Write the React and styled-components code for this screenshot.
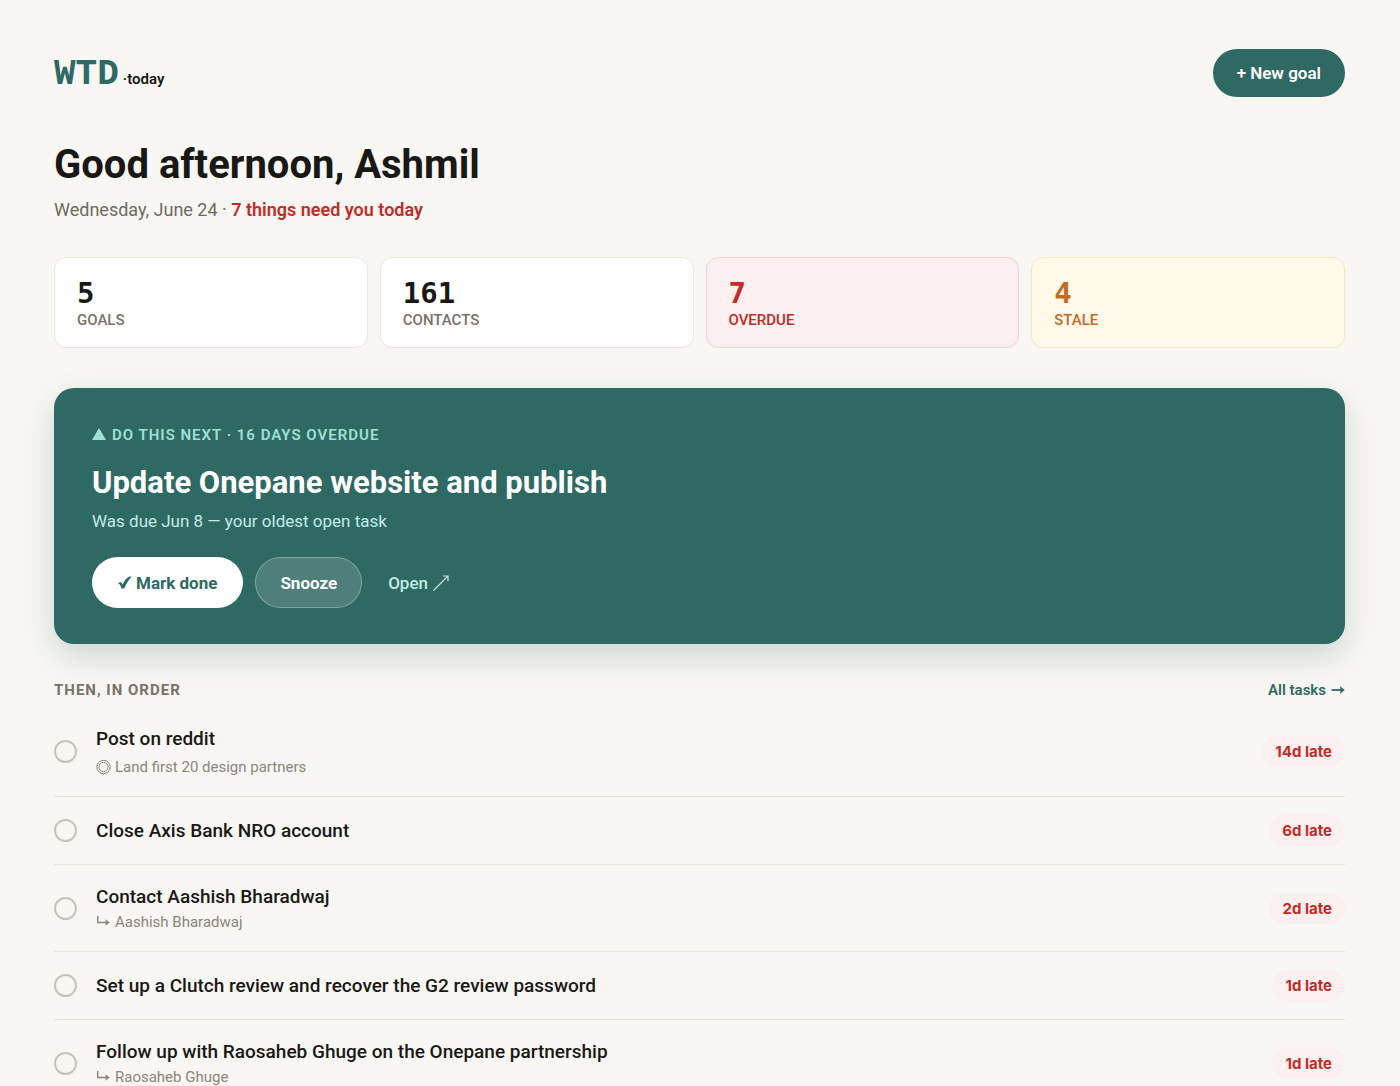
import React from "react";
import styled, { createGlobalStyle } from "styled-components";

const teal = "#2f6963";
const sans = `Roboto, "Liberation Sans", sans-serif`;
const grotesk = `Inter, "Liberation Sans", sans-serif`;

const GlobalStyle = createGlobalStyle`
  *, *::before, *::after { box-sizing: border-box; }
  body {
    margin: 0;
    background: #f9f7f3;
    color: #191815;
    font-family: ${sans};
    -webkit-font-smoothing: antialiased;
  }
  h1, h2, h3, p, ul, dl, dd { margin: 0; padding: 0; }
  button { font-family: inherit; cursor: pointer; }
  a { text-decoration: none; }
`;

const Page = styled.main`
  padding: 49px 55px 0 54px;
`;

const TopBar = styled.header`
  display: flex;
  align-items: center;
  justify-content: space-between;
`;

const Logo = styled.a`
  display: flex;
  align-items: baseline;
  gap: 4px;
  padding-top: 4px;
  color: #191815;
`;

const LogoMark = styled.span`
  font-family: "Liberation Mono", monospace;
  font-size: 36px;
  line-height: 44px;
  font-weight: 700;
  color: ${teal};
`;

const LogoSuffix = styled.span`
  font-size: 15px;
  font-weight: 600;
`;

const NewGoal = styled.button`
  height: 48px;
  padding: 0 24px;
  border: 0;
  border-radius: 24px;
  background: ${teal};
  color: #fff;
  font-size: 17px;
  font-weight: 600;
`;

const Greeting = styled.section`
  padding: 42px 0 35px;
`;

const Title = styled.h1`
  font-size: 40px;
  line-height: 52px;
  font-weight: 700;
`;

const Today = styled.p`
  padding-top: 7px;
  font-size: 18px;
  line-height: 24px;
  color: #6f6a62;
  strong { color: #c22c26; font-weight: 600; }
`;

const Stats = styled.dl`
  display: grid;
  grid-template-columns: repeat(4, 1fr);
  gap: 12px;
`;

const tones = {
  plain: { bg: "#ffffff", line: "#ebe7df", number: "#191815", label: "#7a7268" },
  danger: { bg: "#fbefef", line: "#f5cfd1", number: "#c22c26", label: "#c22c26" },
  warn: { bg: "#fef9e9", line: "#f9e6bf", number: "#c56c24", label: "#c56c24" },
};

const Stat = styled.div`
  display: flex;
  flex-direction: column-reverse;
  padding: 18px 22px 16px;
  border: 1px solid ${(p) => tones[p.$tone].line};
  border-radius: 12px;
  background: ${(p) => tones[p.$tone].bg};
  dt {
    font-size: 15px;
    line-height: 21px;
    font-weight: 500;
    color: ${(p) => tones[p.$tone].label};
  }
  dd {
    font-family: "DejaVu Sans Mono", monospace;
    font-size: 29px;
    line-height: 34px;
    font-weight: 700;
    color: ${(p) => tones[p.$tone].number};
  }
`;

const Hero = styled.section`
  margin-top: 40px;
  padding: 36px 38px;
  border-radius: 20px;
  background: ${teal};
  box-shadow: 0 12px 32px rgba(47, 105, 99, 0.22);
`;

const Eyebrow = styled.p`
  display: flex;
  align-items: center;
  gap: 6px;
  font-size: 15px;
  line-height: 22px;
  font-weight: 600;
  letter-spacing: 1px;
  color: #9fe0d6;
`;

const HeroTitle = styled.h2`
  padding-top: 17px;
  font-size: 31px;
  line-height: 40px;
  font-weight: 700;
  color: #fff;
`;

const HeroNote = styled.p`
  padding-top: 6px;
  font-size: 17px;
  line-height: 24px;
  color: #c2ebe3;
`;

const Actions = styled.div`
  display: flex;
  align-items: center;
  gap: 12px;
  padding-top: 24px;
`;

const Action = styled.button`
  display: flex;
  align-items: center;
  gap: 4px;
  height: 51px;
  padding: 0 ${(p) => (p.$ghost ? 24 : 26)}px;
  border: ${(p) => (p.$ghost ? "1px solid rgba(255, 255, 255, 0.3)" : "0")};
  border-radius: 26px;
  background: ${(p) => (p.$ghost ? "rgba(255, 255, 255, 0.15)" : "#fff")};
  color: ${(p) => (p.$ghost ? "#fff" : teal)};
  font-size: 17px;
  font-weight: 700;
`;

const OpenLink = styled.a`
  display: flex;
  align-items: center;
  gap: 5px;
  padding: 0 14px;
  font-size: 17px;
  font-weight: 500;
  color: #c2ebe3;
`;

const ListHeader = styled.div`
  display: flex;
  align-items: center;
  justify-content: space-between;
  padding: 34px 0 5px;
  line-height: 24px;
`;

const ListTitle = styled.h3`
  font-size: 15px;
  font-weight: 700;
  letter-spacing: 1px;
  color: #7a7268;
`;

const AllTasks = styled.a`
  display: flex;
  align-items: center;
  gap: 5px;
  font-size: 15px;
  font-weight: 600;
  color: ${teal};
`;

const List = styled.ul`
  list-style: none;
`;

const Row = styled.li`
  display: flex;
  align-items: center;
  padding: 18px 0;
  border-bottom: 1px solid #e6e3dd;
`;

const Check = styled.input`
  appearance: none;
  flex: none;
  width: 23px;
  height: 23px;
  margin: 0 19px 0 0;
  border: 2px solid #c9c2b7;
  border-radius: 50%;
  cursor: pointer;
`;

const Body = styled.div`
  flex: 1;
  min-width: 0;
`;

const TaskName = styled.label`
  display: block;
  font-size: 19px;
  line-height: 27px;
  font-weight: 500;
`;

const Context = styled.p`
  display: flex;
  align-items: center;
  gap: 4px;
  font-size: 15px;
  line-height: 21px;
  padding-top: ${(p) => (p.$goal ? 5 : 2)}px;
  color: #8c857b;
`;

const Late = styled.span`
  padding: 0 13px;
  border-radius: 16px;
  background: #fbefef;
  color: #c22c26;
  font-family: ${grotesk};
  font-size: 15px;
  line-height: 31px;
  font-weight: 700;
`;

const TriangleIcon = () => (
  <svg width="14" height="14" viewBox="0 0 14 14" aria-hidden="true">
    <path d="M7 0 L14 12 H0 Z" fill="currentColor" />
  </svg>
);

const TickIcon = () => (
  <svg width="14" height="14" viewBox="0 0 14 14" aria-hidden="true">
    <path d="M0.2 7.400 C1.600 5.800 3.400 5.800 4 7.600 L4.500 8.800 C6 5.200 8.400 1.800 11.400 0.400 L13.800 0.400 C10.400 3.800 8.200 7.600 6.400 12.200 L3.600 12.800 C2.900 10.400 2.200 8.200 0.200 7.400 Z" fill="currentColor" />
  </svg>
);

const OpenIcon = () => (
  <svg width="16" height="16" viewBox="0 0 16 16" fill="none" stroke="currentColor" aria-hidden="true">
    <path d="M0.500 15.500 L15 1 M10 1 H15 V6" strokeWidth="1.200" />
  </svg>
);

const ArrowIcon = () => (
  <svg width="14" height="10" viewBox="0 0 14 10" aria-hidden="true">
    <path d="M0.500 5 H11" stroke="currentColor" strokeWidth="1.800" />
    <path d="M8.800 1 L13.800 5 L8.800 9 L9.800 5 Z" fill="currentColor" />
  </svg>
);

const GoalIcon = () => (
  <svg width="15" height="15" viewBox="0 0 15 15" fill="none" stroke="currentColor" aria-hidden="true">
    <circle cx="7.500" cy="7" r="6.700" />
    <circle cx="7.500" cy="7" r="4.600" />
  </svg>
);

const ContactIcon = () => (
  <svg width="15" height="14" viewBox="0 0 15 14" aria-hidden="true">
    <path d="M1.700 0 V6.500 H11" fill="none" stroke="currentColor" strokeWidth="1.400" />
    <path d="M9.200 3.200 L13.800 6.500 L9.200 9.800 L10 6.500 Z" fill="currentColor" />
  </svg>
);

const stats = [
  { label: "GOALS", value: "5", tone: "plain" },
  { label: "CONTACTS", value: "161", tone: "plain" },
  { label: "OVERDUE", value: "7", tone: "danger" },
  { label: "STALE", value: "4", tone: "warn" },
];

const tasks = [
  { id: "reddit", name: "Post on reddit", goal: "Land first 20 design partners", late: "14d late" },
  { id: "axis", name: "Close Axis Bank NRO account", late: "6d late" },
  { id: "aashish", name: "Contact Aashish Bharadwaj", contact: "Aashish Bharadwaj", late: "2d late" },
  { id: "clutch", name: "Set up a Clutch review and recover the G2 review password", late: "1d late" },
  { id: "raosaheb", name: "Follow up with Raosaheb Ghuge on the Onepane partnership", contact: "Raosaheb Ghuge", late: "1d late" },
];

export default function App() {
  return (
    <>
      <GlobalStyle />
      <Page>
        <TopBar>
          <Logo href="#">
            <LogoMark>WTD</LogoMark>
            <LogoSuffix>·today</LogoSuffix>
          </Logo>
          <NewGoal>+ New goal</NewGoal>
        </TopBar>

        <Greeting>
          <Title>Good afternoon, Ashmil</Title>
          <Today>
            Wednesday, June 24 · <strong>7 things need you today</strong>
          </Today>
        </Greeting>

        <Stats>
          {stats.map((s) => (
            <Stat key={s.label} $tone={s.tone}>
              <dt>{s.label}</dt>
              <dd>{s.value}</dd>
            </Stat>
          ))}
        </Stats>

        <Hero>
          <Eyebrow>
            <TriangleIcon />
            DO THIS NEXT · 16 DAYS OVERDUE
          </Eyebrow>
          <HeroTitle>Update Onepane website and publish</HeroTitle>
          <HeroNote>Was due Jun 8 — your oldest open task</HeroNote>
          <Actions>
            <Action>
              <TickIcon />
              Mark done
            </Action>
            <Action $ghost>Snooze</Action>
            <OpenLink href="#">
              Open
              <OpenIcon />
            </OpenLink>
          </Actions>
        </Hero>

        <ListHeader>
          <ListTitle>THEN, IN ORDER</ListTitle>
          <AllTasks href="#">
            All tasks
            <ArrowIcon />
          </AllTasks>
        </ListHeader>

        <List>
          {tasks.map((t) => (
            <Row key={t.id}>
              <Check type="checkbox" id={t.id} />
              <Body>
                <TaskName htmlFor={t.id}>{t.name}</TaskName>
                {t.goal && (
                  <Context $goal>
                    <GoalIcon />
                    {t.goal}
                  </Context>
                )}
                {t.contact && (
                  <Context>
                    <ContactIcon />
                    {t.contact}
                  </Context>
                )}
              </Body>
              <Late>{t.late}</Late>
            </Row>
          ))}
        </List>
      </Page>
    </>
  );
}
